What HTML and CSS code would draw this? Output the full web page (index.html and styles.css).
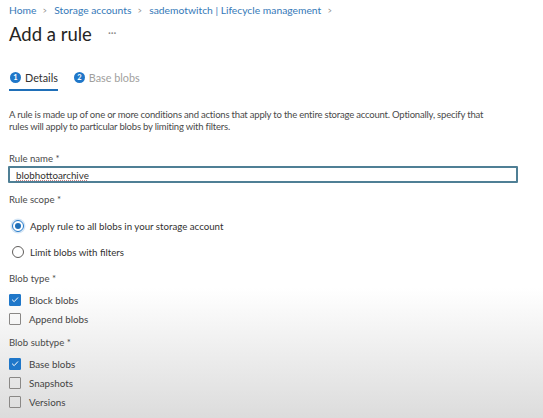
FILE: index.html
```html
<!DOCTYPE html>
<html>
<head>
<meta charset="utf-8">
<link rel="stylesheet" href="styles.css">
</head>
<body>
<div class="page">
  <nav class="crumbs">
    <span>Home</span><span class="sep">&gt;</span>
    <span>Storage accounts</span><span class="sep">&gt;</span>
    <span>sademotwitch | Lifecycle management</span><span class="sep">&gt;</span>
  </nav>
  <div class="title-row">
    <h1>Add a rule</h1>
    <span class="more">···</span>
  </div>
  <div class="tabs">
    <div class="tab active"><span class="num">1</span>Details</div>
    <div class="tab"><span class="num">2</span>Base blobs</div>
  </div>
  <p class="desc">A rule is made up of one or more conditions and actions that apply to the entire storage account. Optionally, specify that rules will apply to particular blobs by limiting with filters.</p>

  <div class="field f-name">
    <div class="label">Rule name *</div>
    <div class="input"><span class="typed">blobhottoarchive</span></div>
  </div>

  <div class="field f-scope">
    <div class="label">Rule scope *</div>
    <div class="radios">
      <div class="radio checked"><span class="dot"></span>Apply rule to all blobs in your storage account</div>
      <div class="radio"><span class="dot"></span>Limit blobs with filters</div>
    </div>
  </div>

  <div class="field f-type">
    <div class="label">Blob type *</div>
    <div class="checks">
      <div class="check on"><span class="box"><svg viewBox="0 0 12 12"><path d="M2.5 6.2 L5 8.6 L9.6 3.6" fill="none" stroke="#fff" stroke-width="1.2"/></svg></span>Block blobs</div>
      <div class="check"><span class="box"></span>Append blobs</div>
    </div>
  </div>

  <div class="field f-sub">
    <div class="label">Blob subtype *</div>
    <div class="checks">
      <div class="check on"><span class="box"><svg viewBox="0 0 12 12"><path d="M2.5 6.2 L5 8.6 L9.6 3.6" fill="none" stroke="#fff" stroke-width="1.2"/></svg></span>Base blobs</div>
      <div class="check"><span class="box"></span>Snapshots</div>
      <div class="check"><span class="box"></span>Versions</div>
    </div>
  </div>
</div>
</body>
</html>
```

FILE: styles.css
```css
html, body {
  margin: 0;
  padding: 0;
}
body {
  width: 543px;
  height: 418px;
  overflow: hidden;
  font-family: "Lato", "Open Sans", sans-serif;
  color: #323130;
  background: linear-gradient(to bottom, #ffffff 0px, #ffffff 288px, #dcdcdc 418px);
}
.page {
  padding: 0 9px;
}
.crumbs {
  font-size: 10.3px;
  color: #3579b8;
  display: flex;
  gap: 6px;
  height: 20px;
  align-items: center;
}
.crumbs .sep {
  color: #8a8886;
  font-size: 10px;
  transform: scaleX(0.7);
}
.title-row {
  display: flex;
  align-items: center;
  gap: 16px;
  margin-top: 0;
  height: 20px;
  padding: 4px 0 6px 0;
}
h1 {
  margin: 0;
  font-size: 18.5px;
  font-weight: 400;
  color: #252423;
}
.more {
  font-size: 11px;
  color: #8a8886;
  margin-top: -4px;
}
.tabs {
  display: flex;
  gap: 15px;
  margin-top: 20px;
}
.tab {
  display: flex;
  align-items: center;
  font-size: 10.8px;
  line-height: 15px;
  height: 15px;
  padding-bottom: 4px;
  color: #a19f9d;
  gap: 4px;
  border-bottom: 2px solid transparent;
}
.tab.active {
  color: #323130;
  border-bottom-color: #1f6fb8;
}
.num {
  width: 11px;
  height: 11px;
  border-radius: 50%;
  background: #1f77c9;
  color: #fff;
  font-size: 7.5px;
  font-weight: 700;
  display: flex;
  align-items: center;
  justify-content: center;
  margin-left: 1px;
}
.desc {
  font-size: 9.5px;
  letter-spacing: -0.2px;
  line-height: 12px;
  color: #4a4a4a;
  margin: 18px 0 0 0;
  width: 486px;
}
.label {
  font-size: 9.6px;
  color: #4a4a4a;
  height: 12px;
  line-height: 12px;
}
.f-name { margin-top: 20px; }
.f-scope { margin-top: 11px; }
.f-type { margin-top: 14px; }
.f-sub { margin-top: 12px; }
.input {
  margin-top: 1px;
  width: 510px;
  height: 17px;
  box-sizing: border-box;
  border: 2px solid #4f7f95;
  border-radius: 1px;
  margin-left: -1px;
  display: flex;
  align-items: center;
  padding-left: 6px;
  font-size: 9.8px;
  color: #323130;
}
.typed {
  text-decoration: underline dotted #c98080;
  text-decoration-thickness: 1px;
  text-underline-offset: 1px;
}
.radios {
  margin-top: 12px;
  display: flex;
  flex-direction: column;
  gap: 11px;
}
.radio {
  display: flex;
  align-items: center;
  gap: 6px;
  font-size: 9.7px;
  color: #323130;
  height: 15px;
}
.radio .dot {
  width: 12px;
  height: 12px;
  border: 1px solid #605e5c;
  border-radius: 50%;
  box-sizing: border-box;
  margin-left: 3px;
  display: flex;
  align-items: center;
  justify-content: center;
}
.radio.checked .dot {
  border-color: #1f77c9;
  box-shadow: 0 0 0 1.5px #d6e6f5;
}
.radio.checked .dot::after {
  content: "";
  width: 6px;
  height: 6px;
  border-radius: 50%;
  background: #1f6fb8;
}
.checks {
  margin-top: 8px;
  display: flex;
  flex-direction: column;
  gap: 6px;
}
.check {
  display: flex;
  align-items: center;
  gap: 8px;
  font-size: 9.8px;
  color: #444;
  height: 13px;
}
.check .box {
  width: 12px;
  height: 12px;
  box-sizing: border-box;
  border: 1px solid #8a8886;
  border-radius: 1px;
  display: flex;
  align-items: center;
  justify-content: center;
}
.check.on .box {
  background: #1f77c9;
  border-color: #1f77c9;
}
.check .box svg {
  width: 11px;
  height: 11px;
}
```
